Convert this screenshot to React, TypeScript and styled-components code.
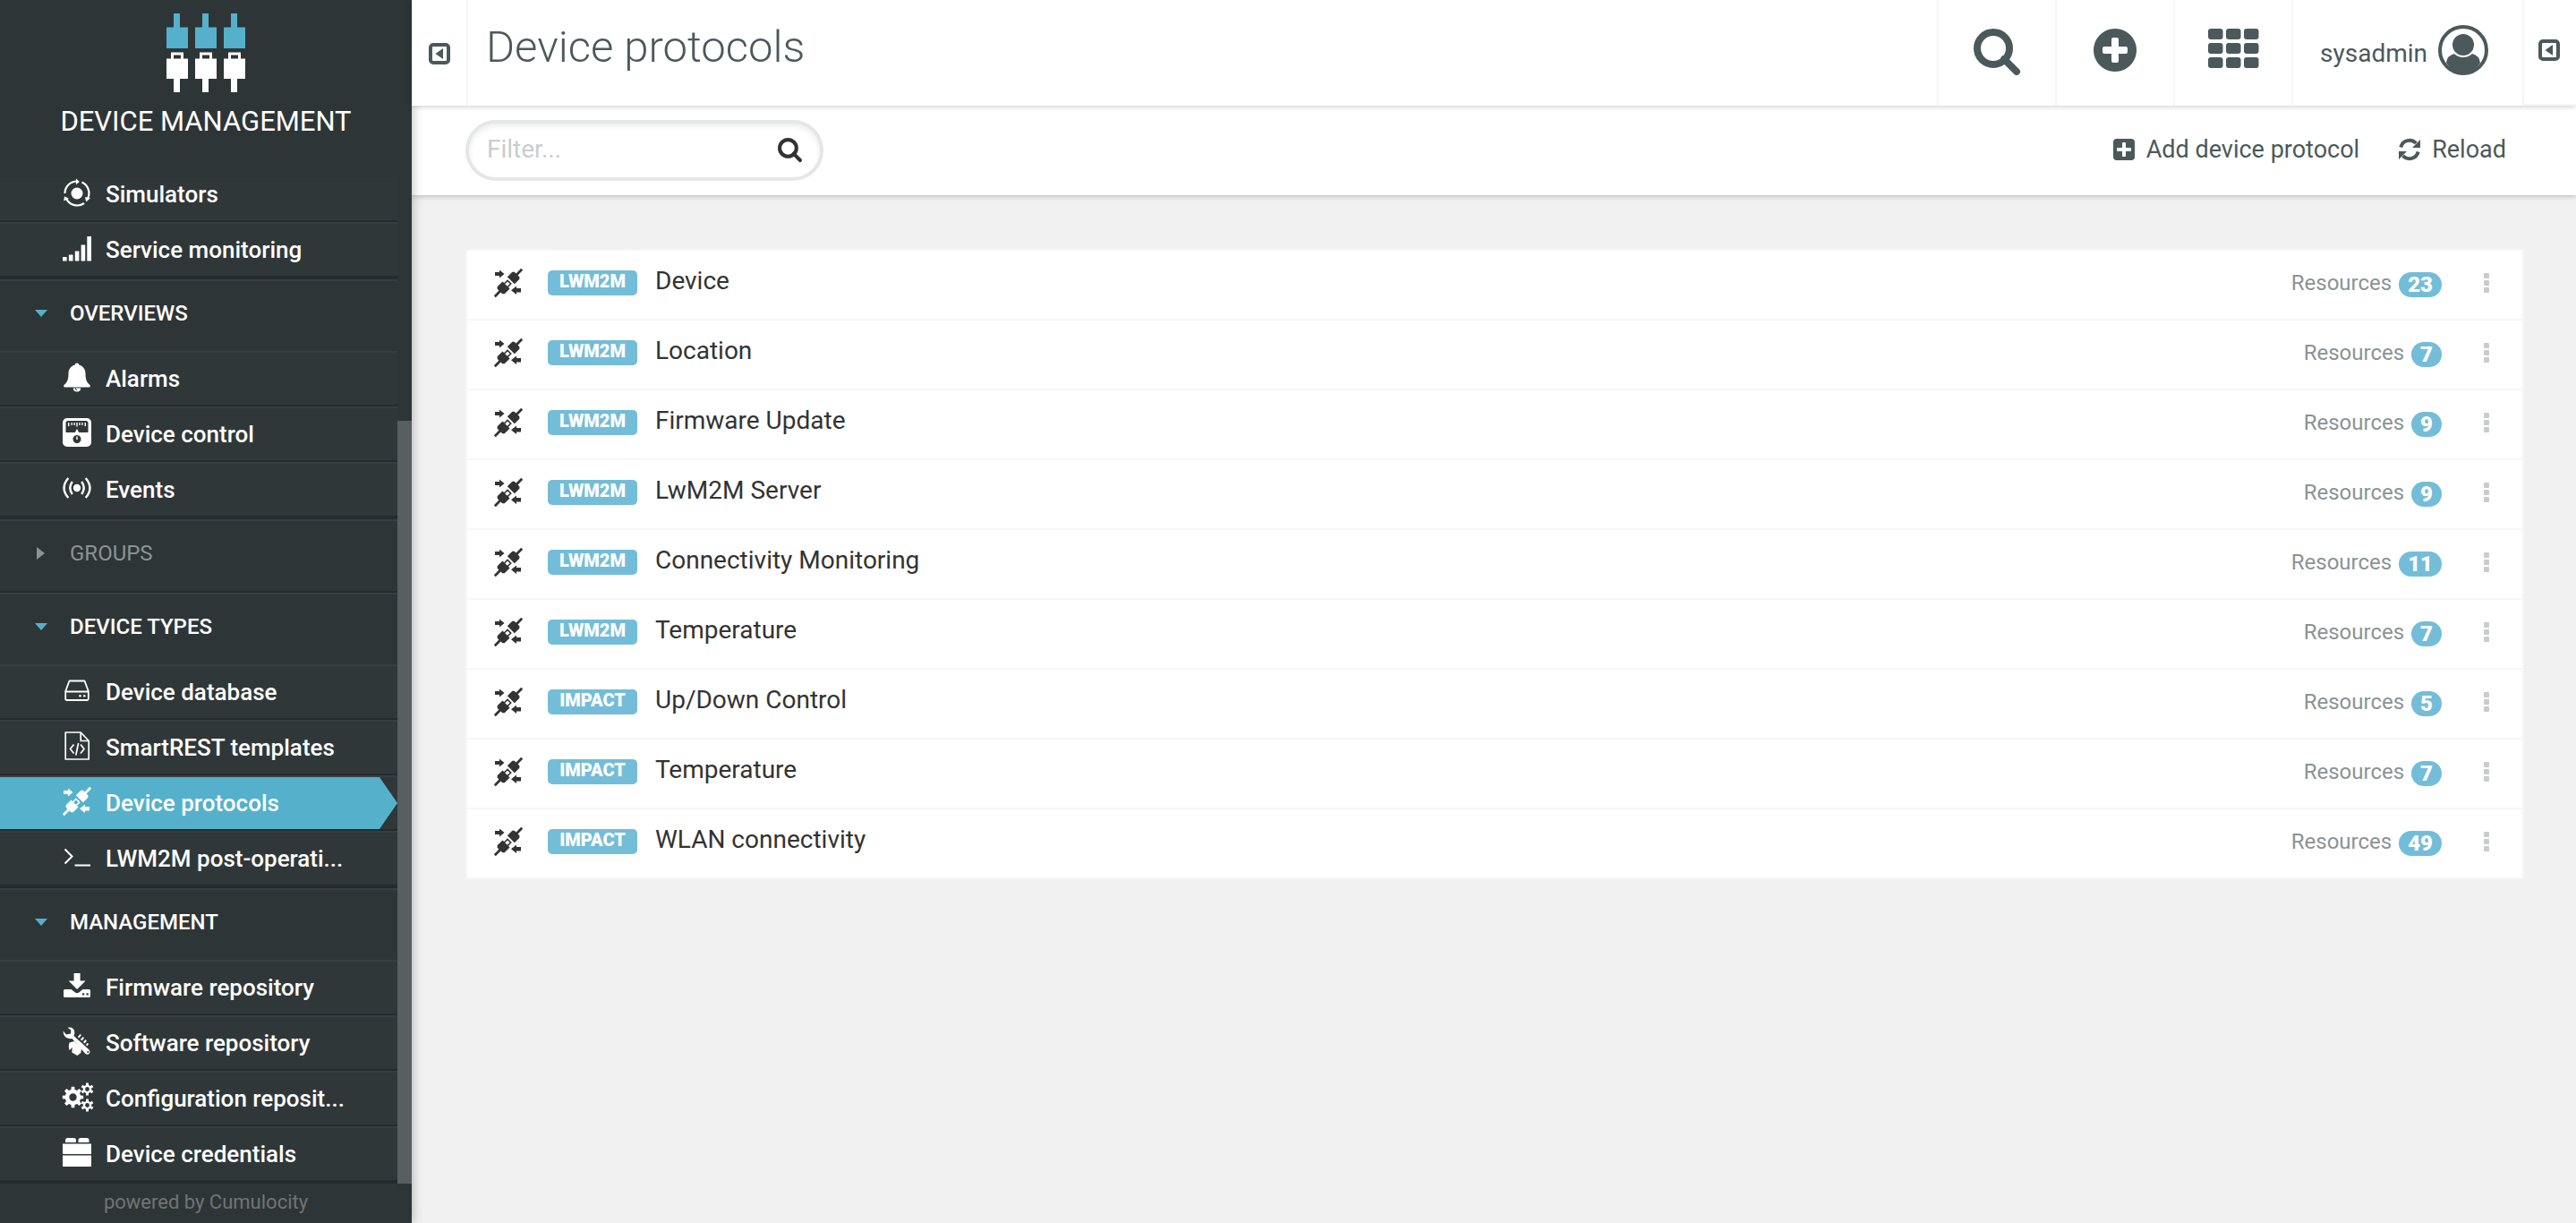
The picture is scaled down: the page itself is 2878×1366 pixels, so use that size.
import React, { useState } from "react";
import type { ReactNode } from "react";
import styled, { createGlobalStyle, css } from "styled-components";

const color = {
  side: "#2e3537",
  item: "#303739",
  dark: "#252c2f",
  light: "#373e41",
  brand: "#55b1cb",
  badge: "#74bdd8",
  slate: "#4b595b",
  ink: "#333333",
  rule: "#f5f6f6",
};

const GlobalStyle = createGlobalStyle`
  *, *::before, *::after { box-sizing: border-box; }
  body {
    margin: 0;
    background: #f1f1f1;
    color: ${color.ink};
    font: 400 28px/32px Roboto, "Liberation Sans", sans-serif;
  }
  button, input { font: inherit; color: inherit; }
  button { border: 0; background: none; padding: 0; cursor: pointer; text-align: left; }
  a { color: inherit; text-decoration: none; }
  svg { display: block; flex: none; }
`;

/* ---------- icons ---------- */

const Icon = ({ size = 32, box = 32, children }: { size?: number; box?: number; children: ReactNode }) => (
  <svg width={size} height={size} viewBox={`0 0 ${box} ${box}`} fill="currentColor" aria-hidden="true" overflow="visible">
    {children}
  </svg>
);

const gearPath = (cx: number, cy: number, teeth: number, outer: number, inner: number, hole: number) => {
  const step = (Math.PI * 2) / teeth;
  const at = (r: number, a: number) => `${(cx + r * Math.sin(a)).toFixed(2)} ${(cy - r * Math.cos(a)).toFixed(2)}`;
  let d = "";
  for (let i = 0; i < teeth; i++) {
    const a = i * step;
    d += `${i ? "L" : "M"}${at(inner, a - step * 0.3)}L${at(outer, a - step * 0.19)}L${at(outer, a + step * 0.19)}L${at(inner, a + step * 0.3)}`;
  }
  return `${d}ZM${cx - hole} ${cy}a${hole} ${hole} 0 1 0 ${hole * 2} 0a${hole} ${hole} 0 1 0 ${-hole * 2} 0Z`;
};

const ProtocolIcon = () => (
  <Icon>
    <path d="M1 4h5V1.500L11.500 6 6 10.500V8H1zM30 22h-5v-2.500L19 24.200l6 4.800v-2.500h5z" />
    <g transform="rotate(45 16 16)">
      <path d="M14.600-5.500h2.800v8H20l1.700 1.700V12H10.300V4.200L12 2.500h2.600zM14.600 37.500h2.800v-8H20l1.700-1.700V19.500H10.300v8.300l1.700 1.700h2.600z" />
      <path d="M13.400 20v-5.200h5.200V20" fill="none" stroke="currentColor" strokeWidth="1.600" />
    </g>
  </Icon>
);

const SimulatorIcon = () => (
  <Icon>
    <circle cx="16" cy="17" r="6.500" />
    <g fill="none" stroke="currentColor" strokeWidth="2.200">
      <path d="M2.500 17A13.500 13.500 0 0 1 15 3.500" />
      <path d="M21.500 4.600A13.500 13.500 0 0 1 28.200 22.500" />
      <path d="M24 28A13.500 13.500 0 0 1 4.400 23.500" />
    </g>
    <path d="M15 .5 18.800 4 15 7.200zM31 22.200l-4.800 4.300-1.200-5.500zM1.200 25.500 2 20.300l5 2.400z" />
  </Icon>
);

const SignalIcon = () => (
  <Icon>
    <path d="M0 26h4.600v4.600H0zM6.900 23.500h4.600v7.100H6.900zM13.800 19.500h4.600v11.100h-4.600zM20.600 12.500h4.600v18.100h-4.600zM27.300 3H32v27.600h-4.700z" />
  </Icon>
);

const BellIcon = () => (
  <Icon>
    <path d="M16 .5c1.300 0 2.200.9 2.200 2.100C22.500 3.600 25.500 7.500 25.500 12c0 7.500 1.500 10 5 13 .6.600.3 2.500-.8 2.500H2.300c-1.100 0-1.400-1.900-.8-2.500 3.500-3 5-5.500 5-13 0-4.500 3-8.400 7.300-9.400C13.800 1.400 14.700.5 16 .5z" />
    <path d="M11.800 28.500h8.400a4.200 4 0 0 1-8.400 0z" />
    <path d="M14 28.500q.3 2 2.200 2" fill="none" stroke={color.item} strokeWidth="1" />
  </Icon>
);

const GaugeIcon = () => (
  <Icon>
    <path fillRule="evenodd" d="M5 0h22a5 5 0 0 1 5 5v22a5 5 0 0 1-5 5H5a5 5 0 0 1-5-5V5a5 5 0 0 1 5-5zM6 3Q3.500 3 3.500 5.500V16h10.300L16 12l2.200 4h10.300V5.500Q28.500 3 26 3zM16 19a4.500 4.500 0 1 0 .01 0z" />
    <path d="M6 5h1.400v4H6zM9.500 5h1.300v3H9.500zM12.500 5h1.300v3h-1.300zM15.300 5h1.400v4.500h-1.400zM18.300 5h1.300v3h-1.300zM21.300 5h1.300v3h-1.300zM24.600 5H26v4h-1.400z" />
    <path d="M15.300 20.500h1.400V24h-1.400z" />
  </Icon>
);

const BroadcastIcon = () => (
  <Icon>
    <circle cx="16" cy="16" r="4.200" />
    <g fill="none" stroke="currentColor" strokeWidth="2.400">
      <path d="M10.800 9q-5 7 0 14M21.200 9q5 7 0 14M6.300 5q-9.500 11 0 22M25.700 5q9.500 11 0 22" />
    </g>
  </Icon>
);

const DriveIcon = () => (
  <Icon>
    <path d="M7.500 5.500h17L28.800 17v8.500q0 1.500-1.500 1.500H4.700q-1.500 0-1.500-1.500V17zM3.200 17.500h25.600" fill="none" stroke="currentColor" strokeWidth="1.800" strokeLinejoin="round" />
    <circle cx="19.500" cy="22.300" r="1.300" />
    <circle cx="24.300" cy="22.300" r="1.300" />
  </Icon>
);

const CodeFileIcon = () => (
  <Icon>
    <g fill="none" stroke="currentColor" strokeWidth="1.700" strokeLinejoin="round">
      <path d="M3.200 1h17l9 9.500V31h-26zM20.200 1v9.500h9" />
      <path d="m12.500 14.500-4 5 4 5M20 14.500l4 5-4 5M17.600 13l-2.800 13.500" />
    </g>
  </Icon>
);

const PromptIcon = () => (
  <Icon>
    <path d="m2.500 7.500 8 8-8 8M13.500 25.500H31" fill="none" stroke="currentColor" strokeWidth="2" />
  </Icon>
);

const FirmwareIcon = () => (
  <Icon>
    <path d="M12.600 2h7v8.500h6L16.100 20 6.600 10.500h6z" />
    <path fillRule="evenodd" d="M2.500 20h7l4.500 3.500q2 1.300 4.200 0L22.500 20h7q1.500 0 1.500 1.500v6q0 1.500-1.500 1.500h-27Q1 29 1 27.500v-6Q1 20 2.500 20zM22 24.200v2.400h2.200v-2.400zm4.500 0v2.400h2.200v-2.400z" />
  </Icon>
);

const WrenchHandIcon = () => (
  <Icon>
    <path d="M5.500.8Q11-.8 13 4q1 3-.5 6l16 14.500q3 2.500 1.500 5-2.500 2.500-5 0L10.500 13Q4 14 1.200 8.500L.5 4.500 4 8.500l5-1 .3-4z" />
    <path d="M7.500 17.500 13 16l8 8.500-.7 4.500-4 3-6-3.500.5-5.500-3.300 3q-1.500-4 0-8.500z" />
    <g stroke={color.item} strokeWidth="1.200">
      <path d="m16 11 3.200-3.500q2.500.4 2 2.500l-3 3.500zM19 14l3.300-3.700q2.500.5 2.200 2.600l-3 3.600zM22 17l3-3.500q2.500.4 2.300 2.500l-2.800 3.500zM25 20l2.500-2.800q2.200.5 2 2.500l-2.200 2.500z" />
    </g>
    <circle cx="28.300" cy="28" r="1.100" fill={color.item} />
  </Icon>
);

const GearsIcon = () => (
  <Icon>
    <g fillRule="evenodd">
      <path d={gearPath(11.500, 16.500, 8, 11.800, 8.800, 4.200)} />
      <path d={gearPath(27.500, 7.500, 6, 7.200, 4.800, 2.400)} />
      <path d={gearPath(27.500, 25.500, 6, 7.200, 4.800, 2.400)} />
    </g>
  </Icon>
);

const CredentialsIcon = () => (
  <Icon>
    <path d="M3 5V2.500Q3 0 5.500 0h7Q15 0 15 2.500V5zM17.500 5V2.500Q17.500 0 20 0h7q2.500 0 2.500 2.500V5zM0 6.500h32V18H0zM0 19.500h32V32H0z" />
  </Icon>
);

const SearchIcon = ({ size }: { size: number }) => (
  <Icon size={size} box={52}>
    <path d="m34 34 14 14" stroke="currentColor" strokeWidth="8" strokeLinecap="round" />
    <circle cx="22" cy="22" r="18" fill="none" stroke="currentColor" strokeWidth="8" />
  </Icon>
);

const PlusCircleIcon = () => (
  <Icon size={48} box={48}>
    <path fillRule="evenodd" d="M24 0a24 24 0 1 0 .01 0zM22 10h4q2 0 2 2v8h8q2 0 2 2v4q0 2-2 2h-8v8q0 2-2 2h-4q-2 0-2-2v-8h-8q-2 0-2-2v-4q0-2 2-2h8v-8q0-2 2-2z" />
  </Icon>
);

const PlusSquareIcon = () => (
  <Icon size={24} box={24}>
    <path fillRule="evenodd" d="M4 0h16q4 0 4 4v16q0 4-4 4H4q-4 0-4-4V4q0-4 4-4zM11 4q-1 0-1 1v5H5q-1 0-1 1v2q0 1 1 1h5v5q0 1 1 1h2q1 0 1-1v-5h5q1 0 1-1v-2q0-1-1-1h-5V5q0-1-1-1z" />
  </Icon>
);

const ReloadIcon = () => (
  <Icon size={24} box={24}>
    <path d="M2.300 9.500a10 10 0 0 1 17-4.500M21.700 14.500a10 10 0 0 1-17 4.500" fill="none" stroke="currentColor" strokeWidth="4" />
    <path d="M24 1v9h-9zM0 23v-9h9z" />
  </Icon>
);

const AppsIcon = () => (
  <svg width="57" height="44" viewBox="0 0 57 44" fill="currentColor" aria-hidden="true">
    {[0, 16, 32].map((y) => [0, 20, 40].map((x) => <rect key={`${x}-${y}`} x={x} y={y} width="16.500" height="12" rx="3" />))}
  </svg>
);

const AvatarIcon = () => (
  <Icon size={56} box={56}>
    <circle cx="28" cy="28" r="26" fill="none" stroke="currentColor" strokeWidth="4" />
    <circle cx="28" cy="22" r="12" />
    <path d="M9 42q1-8 9-10 4 4 10 4t10-4q8 2 9 10-7 12-19 12T9 42z" />
  </Icon>
);

const PanelIcon = () => (
  <Icon size={24} box={24}>
    <rect x="2" y="2" width="20" height="20" rx="3" fill="none" stroke="currentColor" strokeWidth="4" />
    <path d="M7.500 12 16 6v12z" />
  </Icon>
);

const BrandIcon = () => (
  <svg width="88" height="88" viewBox="0 0 88 88" aria-hidden="true">
    {[0, 32, 64].map((x) => (
      <g key={x} transform={`translate(${x} 0)`}>
        <path d="M8 0h7v15.500h9V39H0V15.500h8z" fill={color.brand} />
        <path fillRule="evenodd" d="M5 43.500h14v7h5V73h-9v15H8V73H0V50.500h5zM8 46.500v4h8v-4z" fill="#fff" />
      </g>
    ))}
  </svg>
);

/* ---------- sidebar ---------- */

const Shell = styled.div`
  display: grid;
  grid-template-columns: 460px minmax(0, 1fr);
  height: 100vh;
`;

const Sidebar = styled.aside`
  position: relative;
  z-index: 1;
  display: flex;
  flex-direction: column;
  min-height: 0;
  background: ${color.side};
  color: #fff;
  box-shadow: 0 0 12px rgba(0, 0, 0, 0.3);
`;

const Brand = styled.div`
  display: flex;
  flex: none;
  flex-direction: column;
  align-items: center;
  gap: 16px;
  height: 198px;
  padding-top: 15px;
  font-size: 31px;
  line-height: 34px;
  text-transform: uppercase;
`;

const NavScroller = styled.div`
  display: flex;
  flex: 1;
  min-height: 0;
`;

const Nav = styled.nav`
  display: flex;
  flex: 1;
  flex-direction: column;
  justify-content: flex-end;
  min-width: 0;
  overflow: hidden;
`;

const ScrollRail = styled.div`
  display: flex;
  flex-direction: column;
  justify-content: flex-end;
  width: 16px;
`;

const ScrollThumb = styled.div`
  height: 75.8%;
  background: #595e61;
`;

const Section = styled.section`
  flex: none;
  border-bottom: 2px solid ${color.dark};
`;

const SectionHead = styled.button<{ $open: boolean }>`
  display: flex;
  align-items: center;
  gap: 23px;
  width: 100%;
  height: 80px;
  padding: 0 36px 6px;
  border-top: 2px solid ${color.light};
  color: ${(p) => (p.$open ? "#fff" : "#8b9394")};
  font-size: 24px;
  font-weight: ${(p) => (p.$open ? 500 : 400)};
  text-transform: uppercase;
`;

const Caret = styled.span<{ $open: boolean }>`
  display: flex;
  justify-content: center;
  width: 19px;
  color: ${(p) => (p.$open ? color.brand : "#8b9394")};
`;

const NavList = styled.ul`
  margin: 0;
  padding: 0;
  list-style: none;
`;

const NavItem = styled.li`
  height: 62px;
  border-top: 2px solid ${color.light};
  border-bottom: 2px solid ${color.dark};
  background: ${color.item};
`;

const NavLink = styled.a<{ $active: boolean }>`
  display: flex;
  align-items: center;
  gap: 16px;
  height: 58px;
  padding: 0 56px 4px 70px;
  font-size: 26px;
  font-weight: 500;
  ${(p) =>
    p.$active &&
    css`
      background: ${color.brand};
      clip-path: polygon(0 0, calc(100% - 20px) 0, 100% 50%, calc(100% - 20px) 100%, 0 100%);
    `}
`;

const NavLabel = styled.span`
  padding-top: 4px;
  overflow: hidden;
  text-overflow: ellipsis;
  white-space: nowrap;
`;

const Powered = styled.footer`
  flex: none;
  height: 44px;
  color: #6f7576;
  font-size: 22px;
  line-height: 42px;
  text-align: center;
`;

/* ---------- main column ---------- */

const Main = styled.main`
  display: flex;
  flex-direction: column;
  min-width: 0;
`;

const Header = styled.header`
  position: relative;
  z-index: 2;
  display: flex;
  height: 118px;
  background: #fff;
  color: ${color.slate};
  box-shadow: 0 1px 6px rgba(0, 0, 0, 0.2);
`;

const PanelToggle = styled.button`
  width: 61px;
  padding: 2px 0 0 19px;
`;

const Title = styled.h1`
  flex: 1;
  margin: 0;
  padding-left: 20px;
  border-left: 2px solid ${color.rule};
  font-size: 49px;
  font-weight: 300;
  line-height: 106px;
`;

const HeaderButton = styled.button`
  display: flex;
  justify-content: center;
  width: 132px;
  padding-top: 32px;
  border-left: 2px solid ${color.rule};
`;

const UserButton = styled.button`
  display: flex;
  align-items: flex-start;
  justify-content: space-between;
  width: 258px;
  padding: 28px 38px 0 30px;
  border-left: 2px solid ${color.rule};
`;

const UserName = styled.span`
  padding-top: 16px;
`;

const DrawerToggle = styled.button`
  width: 60px;
  padding: 0 0 4px 16px;
  border-bottom: 2px solid ${color.rule};
  border-left: 2px solid ${color.rule};
`;

const Toolbar = styled.div`
  position: relative;
  display: flex;
  align-items: center;
  justify-content: space-between;
  height: 100px;
  padding: 0 78px 0 60px;
  background: #fff;
  color: ${color.slate};
  box-shadow: 0 1px 6px rgba(0, 0, 0, 0.25);
`;

const Filter = styled.label`
  display: flex;
  align-items: center;
  width: 400px;
  height: 68px;
  padding: 0 20px 2px;
  border: 4px solid #e4e7e6;
  border-radius: 34px;
  box-shadow: inset 0 3px 6px rgba(0, 0, 0, 0.08);
  color: ${color.ink};
`;

const FilterInput = styled.input`
  flex: 1;
  min-width: 0;
  padding: 0;
  border: 0;
  outline: 0;
  background: none;
  &::placeholder { color: #c9cdcd; opacity: 1; }
`;

const Actions = styled.div`
  display: flex;
  gap: 44px;
`;

const Action = styled.button`
  display: flex;
  align-items: center;
  gap: 13px;
  padding-bottom: 2px;
  font-size: 27px;
`;

const Content = styled.div`
  padding: 60px 58px 60px 60px;
`;

const List = styled.ul`
  margin: 0;
  padding: 0;
  border: 2px solid ${color.rule};
  background: #fff;
  list-style: none;
`;

const Row = styled.li`
  display: flex;
  align-items: center;
  height: 76px;
  padding: 0 37px 4px 30px;
  & + & {
    height: 78px;
    border-top: 2px solid ${color.rule};
  }
`;

const TypeBadge = styled.span`
  width: 100px;
  height: 28px;
  margin: 0 20px 0 28px;
  border-radius: 5px;
  background: ${color.badge};
  color: #fff;
  font-size: 20px;
  font-weight: 900;
  line-height: 25px;
  text-align: center;
`;

const Name = styled.a`
  flex: 1;
  padding-bottom: 4px;
`;

const Meta = styled.span`
  display: flex;
  align-items: center;
  gap: 8px;
  color: #8b9394;
  font-size: 24px;
`;

const Count = styled.span`
  height: 28px;
  margin-top: 4px;
  padding: 0 10px;
  border-radius: 14px;
  background: ${color.badge};
  color: #fff;
  font-size: 24px;
  font-weight: 900;
  line-height: 28px;
`;

const MenuButton = styled.button`
  display: grid;
  gap: 2px;
  margin-left: 47px;
`;

const Dot = styled.span`
  width: 6px;
  height: 6px;
  border-radius: 1px;
  background: #c9cccb;
`;

/* ---------- data ---------- */

type Item = { label: string; icon: ReactNode; active?: boolean };
type Group = { title?: string; open: boolean; items: Item[] };

const groups: Group[] = [
  {
    open: true,
    items: [
      { label: "Simulators", icon: <SimulatorIcon /> },
      { label: "Service monitoring", icon: <SignalIcon /> },
    ],
  },
  {
    title: "Overviews",
    open: true,
    items: [
      { label: "Alarms", icon: <BellIcon /> },
      { label: "Device control", icon: <GaugeIcon /> },
      { label: "Events", icon: <BroadcastIcon /> },
    ],
  },
  { title: "Groups", open: false, items: [] },
  {
    title: "Device types",
    open: true,
    items: [
      { label: "Device database", icon: <DriveIcon /> },
      { label: "SmartREST templates", icon: <CodeFileIcon /> },
      { label: "Device protocols", icon: <ProtocolIcon />, active: true },
      { label: "LWM2M post-operati...", icon: <PromptIcon /> },
    ],
  },
  {
    title: "Management",
    open: true,
    items: [
      { label: "Firmware repository", icon: <FirmwareIcon /> },
      { label: "Software repository", icon: <WrenchHandIcon /> },
      { label: "Configuration reposit...", icon: <GearsIcon /> },
      { label: "Device credentials", icon: <CredentialsIcon /> },
    ],
  },
];

const protocols = [
  { type: "LWM2M", name: "Device", resources: 23 },
  { type: "LWM2M", name: "Location", resources: 7 },
  { type: "LWM2M", name: "Firmware Update", resources: 9 },
  { type: "LWM2M", name: "LwM2M Server", resources: 9 },
  { type: "LWM2M", name: "Connectivity Monitoring", resources: 11 },
  { type: "LWM2M", name: "Temperature", resources: 7 },
  { type: "IMPACT", name: "Up/Down Control", resources: 5 },
  { type: "IMPACT", name: "Temperature", resources: 7 },
  { type: "IMPACT", name: "WLAN connectivity", resources: 49 },
];

const NavGroup = ({ group }: { group: Group }) => {
  const [open, setOpen] = useState(group.open);
  return (
    <Section>
      {group.title && (
        <SectionHead $open={open} aria-expanded={open} onClick={() => setOpen(!open)}>
          <Caret $open={open}>
            <svg width={open ? 14 : 9} height={open ? 8 : 14} viewBox={open ? "0 0 14 8" : "0 0 9 14"} fill="currentColor" aria-hidden="true">
              <path d={open ? "M0 0h14L7 8z" : "M0 0v14l9-7z"} />
            </svg>
          </Caret>
          {group.title}
        </SectionHead>
      )}
      {open && (
        <NavList>
          {group.items.map((item) => (
            <NavItem key={item.label}>
              <NavLink href="#" $active={!!item.active} aria-current={item.active ? "page" : undefined}>
                {item.icon}
                <NavLabel>{item.label}</NavLabel>
              </NavLink>
            </NavItem>
          ))}
        </NavList>
      )}
    </Section>
  );
};

export default function App() {
  const [query, setQuery] = useState("");
  const shown = protocols.filter((p) => p.name.toLowerCase().includes(query.toLowerCase()));

  return (
    <>
      <GlobalStyle />
      <Shell>
        <Sidebar>
          <Brand>
            <BrandIcon />
            <span>Device management</span>
          </Brand>
          <NavScroller>
            <Nav aria-label="Main">
              {groups.map((group, i) => (
                <NavGroup key={i} group={group} />
              ))}
            </Nav>
            <ScrollRail>
              <ScrollThumb />
            </ScrollRail>
          </NavScroller>
          <Powered>powered by Cumulocity</Powered>
        </Sidebar>

        <Main>
          <Header>
            <PanelToggle aria-label="Toggle navigation">
              <PanelIcon />
            </PanelToggle>
            <Title>Device protocols</Title>
            <HeaderButton aria-label="Search">
              <SearchIcon size={52} />
            </HeaderButton>
            <HeaderButton aria-label="Add">
              <PlusCircleIcon />
            </HeaderButton>
            <HeaderButton aria-label="Applications">
              <AppsIcon />
            </HeaderButton>
            <UserButton>
              <UserName>sysadmin</UserName>
              <AvatarIcon />
            </UserButton>
            <DrawerToggle aria-label="Toggle drawer">
              <PanelIcon />
            </DrawerToggle>
          </Header>

          <Toolbar>
            <Filter>
              <FilterInput
                type="text"
                aria-label="Filter"
                placeholder="Filter..."
                value={query}
                onChange={(e) => setQuery(e.target.value)}
              />
              <SearchIcon size={27} />
            </Filter>
            <Actions>
              <Action>
                <PlusSquareIcon />
                Add device protocol
              </Action>
              <Action>
                <ReloadIcon />
                Reload
              </Action>
            </Actions>
          </Toolbar>

          <Content>
            <List>
              {shown.map((p) => (
                <Row key={`${p.type}-${p.name}`}>
                  <ProtocolIcon />
                  <TypeBadge>{p.type}</TypeBadge>
                  <Name href="#">{p.name}</Name>
                  <Meta>
                    Resources <Count>{p.resources}</Count>
                  </Meta>
                  <MenuButton aria-label={`Options for ${p.name}`}>
                    <Dot />
                    <Dot />
                    <Dot />
                  </MenuButton>
                </Row>
              ))}
            </List>
          </Content>
        </Main>
      </Shell>
    </>
  );
}
